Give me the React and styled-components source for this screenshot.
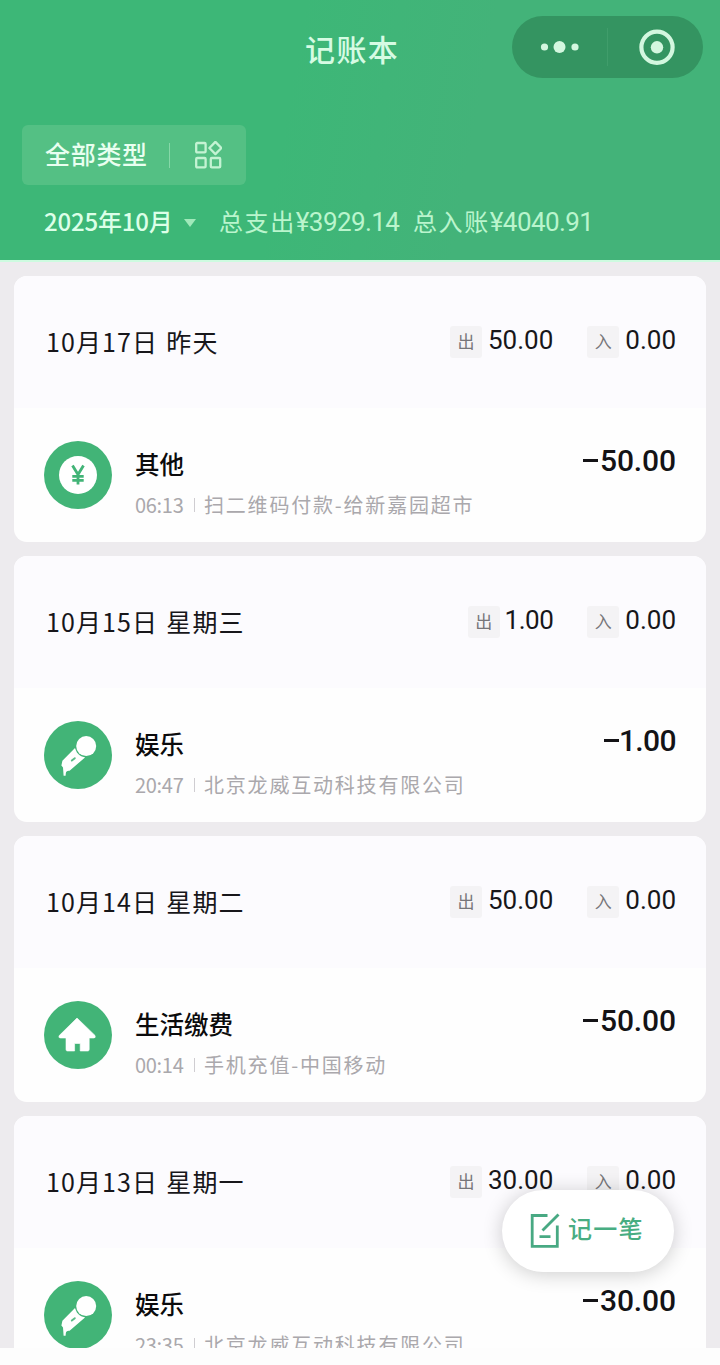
import React from "react";
import styled, { createGlobalStyle } from "styled-components";

const days = [
  {
    id: 1,
    date: "10月17日",
    day: "昨天",
    out: "50.00",
    income: "0.00",
    type: "yen",
    name: "其他",
    time: "06:13",
    note: "扫二维码付款-给新嘉园超市",
    amount: "50.00",
  },
  {
    id: 2,
    date: "10月15日",
    day: "星期三",
    out: "1.00",
    income: "0.00",
    type: "mic",
    name: "娱乐",
    time: "20:47",
    note: "北京龙威互动科技有限公司",
    amount: "1.00",
  },
  {
    id: 3,
    date: "10月14日",
    day: "星期二",
    out: "50.00",
    income: "0.00",
    type: "home",
    name: "生活缴费",
    time: "00:14",
    note: "手机充值-中国移动",
    amount: "50.00",
  },
  {
    id: 4,
    date: "10月13日",
    day: "星期一",
    out: "30.00",
    income: "0.00",
    type: "mic",
    name: "娱乐",
    time: "23:35",
    note: "北京龙威互动科技有限公司",
    amount: "30.00",
  },
];

const TypeIcon = ({ type }) => (
  <svg width="68" height="68" viewBox="0 0 68 68">
    <circle cx="34" cy="34" r="34" fill="#42b477" />
    {type === "yen" && (
      <>
        <circle cx="34" cy="34" r="19" fill="#fff" />
        <path
          d="M28.5 24.6 34 33.6 39.5 24.6M34 33.6V43.5M28.3 35.4H39.7M28.3 39.4H39.7"
          fill="none"
          stroke="#42b477"
          strokeWidth="2.8"
        />
      </>
    )}
    {type === "mic" && (
      <>
        <path
          d="M31 27 41 36.4 25.6 49.8Q22 49.4 21.8 52.4L21.6 54.8H19.6L19 46.6 17.4 44.4 18.4 39.8Z"
          fill="#fff"
        />
        <circle cx="42.2" cy="25.1" r="11.2" fill="#42b477" />
        <circle cx="42.2" cy="25.1" r="10" fill="#fff" />
        <path
          d="M27.8 39.6 30.8 37.2"
          stroke="#5bbd88"
          strokeWidth="1.9"
          strokeLinecap="round"
        />
      </>
    )}
    {type === "home" && (
      <path
        d="M33 17 51 34.4Q52 37 49.6 37H45.2V48.6Q45.2 50 43.8 50H36.2V42.5H30.6V50H23.4Q22 50 22 48.6V37H16.6Q14 37 15.2 34.6Z"
        fill="#fff"
        stroke="#fff"
        strokeWidth="0.6"
        strokeLinejoin="round"
      />
    )}
  </svg>
);

const App = () => {
  return (
    <>
      <GlobalStyle />
      <Page>
        <Header>
          <NavBar>
            <Title>记账本</Title>
            <Capsule>
              <svg width="191" height="62" viewBox="0 0 191 62">
                <g fill="#d3f7df">
                  <circle cx="32.5" cy="31" r="3.6" />
                  <circle cx="47.5" cy="31" r="6" />
                  <circle cx="63" cy="31" r="3.6" />
                  <circle cx="145" cy="31.3" r="6.2" />
                </g>
                <path d="M95.5 12V50" stroke="#409d6b" strokeWidth="1" />
                <circle
                  cx="145"
                  cy="31.3"
                  r="15.6"
                  fill="none"
                  stroke="#d3f7df"
                  strokeWidth="4.2"
                />
              </svg>
            </Capsule>
          </NavBar>
          <FilterButton>
            <span>全部类型</span>
            <FilterLine />
            <svg width="28" height="28" viewBox="0 0 28 28">
              <g fill="none" stroke="#c4f3d3" strokeWidth="2.3">
                <rect x="2.2" y="2" width="9.4" height="9.4" rx="1" />
                <rect x="2.2" y="17" width="9.4" height="9.4" rx="1" />
                <rect x="16.8" y="17" width="9.4" height="9.4" rx="1" />
                <path
                  d="M21.4 0.9 27.4 7 21.4 13.1 15.4 7Z"
                  strokeLinejoin="round"
                />
              </g>
            </svg>
          </FilterButton>
          <Summary>
            <Month>2025年10月</Month>
            <Caret />
            <Total>
              总支出<Money>¥3929.14</Money>
            </Total>
            <Total>
              总入账<Money>¥4040.91</Money>
            </Total>
          </Summary>
        </Header>

        <List>
          {days.map((item) => (
            <Card key={item.id}>
              <CardHead>
                <DateText>
                  {item.date} {item.day}
                </DateText>
                <Sums>
                  <Sum $tight={item.out.startsWith("1")}>
                    <Tag>出</Tag>
                    {item.out}
                  </Sum>
                  <Sum>
                    <Tag>入</Tag>
                    {item.income}
                  </Sum>
                </Sums>
              </CardHead>
              <Record>
                <TypeIcon type={item.type} />
                <Info>
                  <Name>{item.name}</Name>
                  <Detail>
                    <Time>{item.time}</Time>
                    <DetailLine />
                    <span>{item.note}</span>
                  </Detail>
                </Info>
                <Amount $tight={item.amount.startsWith("1")}>
                  <Minus />
                  {item.amount}
                </Amount>
              </Record>
            </Card>
          ))}
        </List>
        <BottomBar />

        <AddButton>
          <svg width="30" height="36" viewBox="0 0 30 36">
            <path
              d="M17.5 2.5H2.2V33.3H27.3V12.5M9.5 23.6H20.5"
              fill="none"
              stroke="#48a983"
              strokeWidth="2.8"
            />
            <path d="M12.5 17.5 28.5 1.4" stroke="#48a983" strokeWidth="2.8" />
          </svg>
          <span>记一笔</span>
        </AddButton>
      </Page>
    </>
  );
};

export default App;

const GlobalStyle = createGlobalStyle`
  * {
    box-sizing: border-box;
  }
  body {
    margin: 0;
    background: #fdfdfd;
    font-family: "Noto Sans CJK SC", sans-serif;
  }
  button {
    border: none;
    padding: 0;
    font-family: inherit;
  }
  svg {
    display: block;
    flex-shrink: 0;
  }
`;

const Page = styled.div`
  position: relative;
  display: flex;
  flex-direction: column;
  width: 720px;
  height: 1365px;
  overflow: hidden;
  white-space: nowrap;
`;

const Header = styled.header`
  height: 262px;
  flex-shrink: 0;
  padding-top: 16px;
  background: linear-gradient(100deg, #3db777 40%, #43b379 65%);
  border-bottom: 2px solid #cdfbe0;
`;

const NavBar = styled.div`
  display: flex;
  align-items: center;
  justify-content: space-between;
  height: 62px;
  padding: 0 17px 0 305px;
`;

const Title = styled.h1`
  margin: 2px 0 0;
  font-size: 30px;
  font-weight: 500;
  line-height: 36px;
  letter-spacing: 1.4px;
  color: #d6fbe3;
`;

const Capsule = styled.div`
  width: 191px;
  height: 62px;
  border-radius: 31px;
  background: #349461;
`;

const FilterButton = styled.button`
  display: flex;
  align-items: center;
  width: 224px;
  height: 60px;
  margin: 47px 0 0 22px;
  padding: 0 24px 0 23px;
  border-radius: 6px;
  background: #54c084;
  color: #e9fff0;
  font-size: 25px;
  font-weight: 500;
  letter-spacing: 0.7px;
  justify-content: space-between;

  span {
    margin-top: -5px;
  }
`;

const FilterLine = styled.i`
  width: 1px;
  height: 25px;
  margin-right: 3px;
  background: #86d8a8;
`;

const Summary = styled.div`
  display: flex;
  align-items: center;
  height: 36px;
  margin-top: 17px;
  padding-left: 44px;
  font-size: 24px;
  color: #baf5cd;
`;

const Month = styled.span`
  width: 128px;
  font-weight: 500;
  letter-spacing: -0.2px;
  color: #dcffe8;
`;

const Caret = styled.i`
  margin: 6px 23px 0 12px;
  border: 6px solid transparent;
  border-top: 8px solid #a0e9ba;
  border-bottom: 0;
`;

const Total = styled.span`
  width: 194px;
  letter-spacing: 1.6px;
`;

const Money = styled.span`
  font-family: Roboto, sans-serif;
  font-size: 26px;
  font-weight: 400;
  letter-spacing: -0.6px;
`;

const List = styled.main`
  display: flex;
  flex-direction: column;
  gap: 14px;
  height: 1086px;
  padding: 14px 14px 0;
  overflow: hidden;
  background: #edebee;
`;

const Card = styled.section`
  flex-shrink: 0;
  height: 266px;
  border-radius: 13px;
  overflow: hidden;
  background: #fefefe;
`;

const CardHead = styled.div`
  display: flex;
  align-items: center;
  justify-content: space-between;
  height: 132px;
  padding: 0 30px 0 32px;
  background: #fcfbfe;
`;

const DateText = styled.span`
  margin-top: -2px;
  font-size: 25px;
  letter-spacing: 1.1px;
  word-spacing: 1.5px;
  color: #17161a;
`;

const Sums = styled.div`
  display: flex;
  gap: 34px;
`;

const Sum = styled.div`
  display: flex;
  align-items: center;
  gap: ${(props) => (props.$tight ? "5px" : "6px")};
  height: 32px;
  margin-top: -4px;
  font-family: Roboto, sans-serif;
  font-size: 26px;
  letter-spacing: ${(props) => (props.$tight ? "-0.5px" : "0")};
  color: #17161a;
`;

const Tag = styled.span`
  display: flex;
  align-items: center;
  justify-content: center;
  width: 32px;
  height: 32px;
  margin-top: 3px;
  padding-bottom: 2px;
  border-radius: 3px;
  background: #f4f3f5;
  font-family: "Noto Sans CJK SC", sans-serif;
  font-size: 17px;
  color: #77767a;
`;

const Record = styled.div`
  display: flex;
  height: 134px;
  padding: 33px 30px 0;
`;

const Info = styled.div`
  flex: 1;
  padding: 5px 0 0 23px;
`;

const Name = styled.div`
  font-size: 24.5px;
  font-weight: 500;
  line-height: 36px;
  color: #0b0b0c;
`;

const Detail = styled.div`
  display: flex;
  align-items: center;
  height: 44px;
  font-size: 20px;
  letter-spacing: 1.8px;
  color: #aaa8ac;
`;

const Time = styled.span`
  width: 51px;
  letter-spacing: -0.3px;
`;

const DetailLine = styled.i`
  width: 1px;
  height: 14px;
  margin: 2px 9px 0 8px;
  background: #cfcdd1;
`;

const Amount = styled.div`
  display: flex;
  align-items: center;
  gap: ${(props) => (props.$tight ? "0" : "2px")};
  height: 38px;
  font-family: Roboto, sans-serif;
  font-size: 30px;
  font-weight: 500;
  letter-spacing: ${(props) => (props.$tight ? "-0.6px" : "-0.1px")};
  color: #141316;
`;

const Minus = styled.i`
  width: 15px;
  height: 3px;
  background: #141316;
`;

const BottomBar = styled.footer`
  flex: 1;
  background: #fdfdfd;
`;

// floating button stays above the list
const AddButton = styled.button`
  position: absolute;
  right: 46px;
  bottom: 93px;
  display: flex;
  align-items: center;
  gap: 8px;
  width: 172px;
  height: 82px;
  padding-left: 28px;
  border-radius: 41px;
  background: #fff;
  box-shadow: 0 2px 20px rgba(0, 0, 0, 0.2);
  color: #48ad82;
  font-size: 24px;
  font-weight: 500;
  letter-spacing: 1.2px;

  span {
    margin-top: -8px;
  }
`;
